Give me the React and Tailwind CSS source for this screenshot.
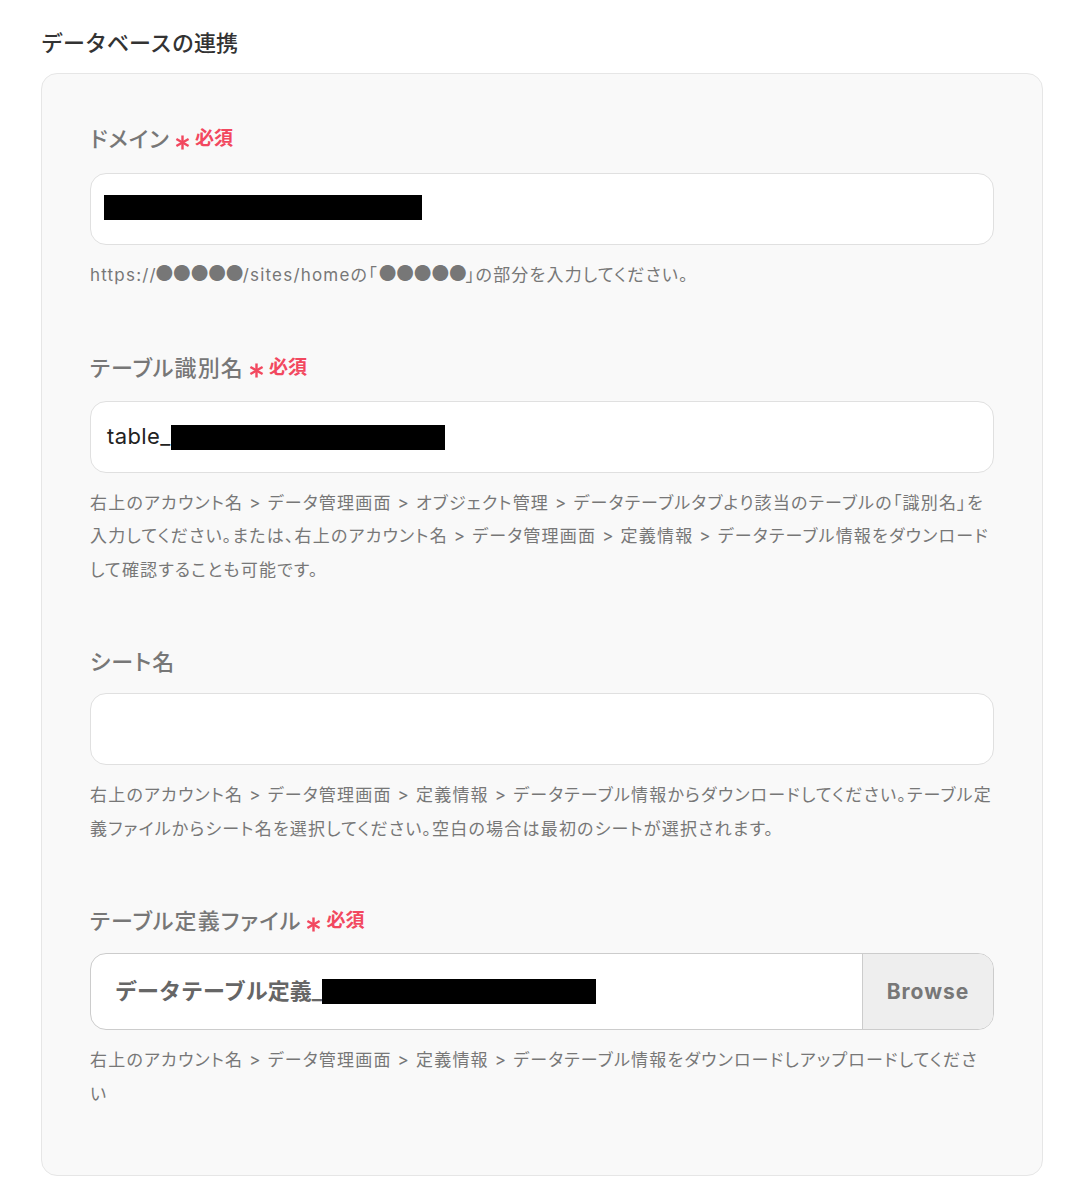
import React from "react";

function Asterisk() {
  return (
    <svg width="15" height="15" viewBox="0 0 16 16" className="mt-[6px] mr-[5px]" aria-hidden="true">
      <g stroke="#f2485f" strokeWidth="2.6" strokeLinecap="butt">
        <line x1="8" y1="0.5" x2="8" y2="15.5" />
        <line x1="1.5" y1="4.2" x2="14.5" y2="11.8" />
        <line x1="1.5" y1="11.8" x2="14.5" y2="4.2" />
      </g>
    </svg>
  );
}

function Label({ children, required, mb }) {
  return (
    <div className={`flex items-center h-[28px] text-[22px] leading-[28px] font-medium tracking-[0.05em] [font-feature-settings:'palt'] text-[#777] ${mb}`}>
      <span>{children}</span>
      {required && (
        <span className="ml-[5px] flex items-center text-[19px] font-semibold tracking-normal text-[#f2485f]">
          <Asterisk />
          必須
        </span>
      )}
    </div>
  );
}

function Help({ children, mt }) {
  return (
    <p className={`${mt} text-[17px] leading-[33.5px] tracking-[1.2px] [font-feature-settings:'palt'] text-[#777]`}>{children}</p>
  );
}

function Dots() {
  return <span className="text-[21px] leading-none tracking-[-1.6px]">●●●●●</span>;
}

export default function App() {
  return (
    <div className="min-h-[1202px] bg-white px-[41px] pt-[28px] font-['Inter','Noto_Sans_CJK_JP',sans-serif]">
      <h2 className="mb-[15px] text-[22px] leading-[30px] font-medium text-[#333]">データベースの連携</h2>
      <div className="w-[1002px] rounded-2xl border border-[#e6e6e6] bg-[#f9f9f9] px-12 pt-[51px] pb-[64px] flex flex-col gap-[61px]">
        <section>
          <Label required mb="mb-[20px]">ドメイン</Label>
          <div className="h-[72px] rounded-2xl border border-[#e0e0e0] bg-white flex items-center px-[13px]">
            <div className="w-[318px] h-[25px] bg-black -mt-[3px]" />
          </div>
          <Help mt="mt-[14px]">
            https:/<span className="tracking-[-1px]">/</span><Dots />/sites/homeの「<Dots />」の部分を入力してください。
          </Help>
        </section>

        <section>
          <Label required mb="mb-[19px]">テーブル識別名</Label>
          <div className="h-[72px] rounded-2xl border border-[#e0e0e0] bg-white flex items-center px-[16px]">
            <span className="text-[22px] tracking-[0.4px] text-[#222]">table_</span>
            <div className="w-[274px] h-[25px] bg-black mt-[2px]" />
          </div>
          <Help mt="mt-[14px]">
            右上のアカウント名 &gt; データ管理画面 &gt; オブジェクト管理 &gt; データテーブルタブより該当のテーブルの「識別名」を入力してください。または、右上のアカウント名 &gt; データ管理画面 &gt; 定義情報 &gt; データテーブル情報をダウンロードして確認することも可能です。
          </Help>
        </section>

        <section>
          <Label mb="mb-[17px]">シート名</Label>
          <div className="h-[72px] rounded-2xl border border-[#e0e0e0] bg-white" />
          <Help mt="mt-[14px]">
            右上のアカウント名 &gt; データ管理画面 &gt; 定義情報 &gt; データテーブル情報からダウンロードしてください。テーブル定義ファイルからシート名を選択してください。空白の場合は最初のシートが選択されます。
          </Help>
        </section>

        <section>
          <Label required mb="mb-[18px]">テーブル定義ファイル</Label>
          <div className="h-[77px] rounded-2xl border border-[#cccccc] bg-white flex overflow-hidden">
            <div className="flex-1 flex items-center pl-[24px] text-[22px] font-semibold text-[#666]">
              <span>データテーブル定義_</span>
              <div className="w-[274px] h-[25px] bg-black" />
            </div>
            <div className="w-[131px] border-l border-[#cccccc] bg-[#eeeeee] flex items-center justify-center text-[21px] font-bold tracking-[1px] text-[#777]">
              Browse
            </div>
          </div>
          <Help mt="mt-[14px]">
            右上のアカウント名 &gt; データ管理画面 &gt; 定義情報 &gt; データテーブル情報をダウンロードしアップロードしてくださ<br />い
          </Help>
        </section>
      </div>
    </div>
  );
}
